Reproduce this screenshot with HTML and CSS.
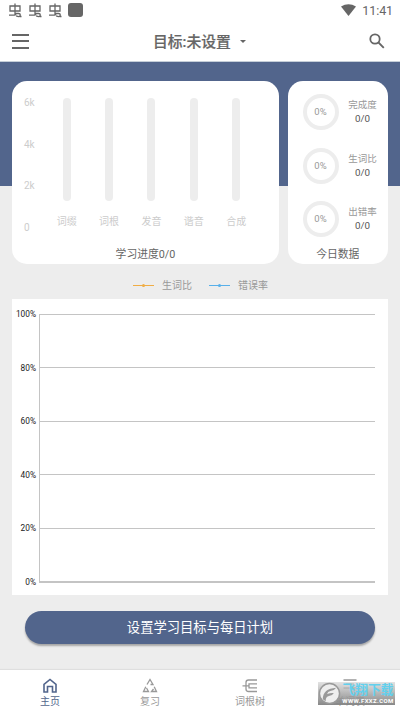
FILE: index.html
```html
<!DOCTYPE html>
<html lang="zh-CN">
<head>
<meta charset="utf-8">
<title>学习进度</title>
<link rel="stylesheet" href="styles.css">
</head>
<body>
<svg width="0" height="0" class="defs"><defs>
<g id="bug"><path d="M2 3h10v5H2zM7 .5v11M1 12.200h5.500Q8 12.200 8 10.500h2.500q1.800 0 1.800 1.500t-2 1.700l-2.200-.9M11.500 13.500h2"/></g>
</defs></svg>
<header class="top">
  <div class="status">
    <svg class="bug" viewBox="0 0 14 15"><use href="#bug"/></svg>
    <svg class="bug" viewBox="0 0 14 15"><use href="#bug"/></svg>
    <svg class="bug" viewBox="0 0 14 15"><use href="#bug"/></svg>
    <span class="square"></span>
    <svg class="wifi" viewBox="0 0 15 12"><path d="M0 2.500Q7.500-2.200 15 2.500L7.500 12z"/></svg>
    <span class="time">11:41</span>
  </div>
  <div class="toolbar">
    <div class="menu"><i></i><i></i><i></i></div>
    <h1>目标:未设置</h1>
    <span class="caret"></span>
    <svg class="search" viewBox="0 0 16 16"><circle cx="6" cy="6" r="4.700"/><path d="M9.500 9.500l5.300 5.300"/></svg>
  </div>
</header>
<main>
  <section class="cards">
    <div class="card progress">
      <div class="plot">
        <div class="scale"><span>6k</span><span>4k</span><span>2k</span><span>0</span></div>
        <div class="col"><i></i><span>词缀</span></div>
        <div class="col"><i></i><span>词根</span></div>
        <div class="col"><i></i><span>发音</span></div>
        <div class="col"><i></i><span>谐音</span></div>
        <div class="col"><i></i><span>合成</span></div>
      </div>
      <div class="caption">学习进度0/0</div>
    </div>
    <div class="card today">
      <div class="stat"><div class="ring">0%</div><div class="info"><span>完成度</span><b>0/0</b></div></div>
      <div class="stat"><div class="ring">0%</div><div class="info"><span>生词比</span><b>0/0</b></div></div>
      <div class="stat"><div class="ring">0%</div><div class="info"><span>出错率</span><b>0/0</b></div></div>
      <div class="caption">今日数据</div>
    </div>
  </section>
  <div class="legend">
    <i class="orange"></i><span>生词比</span><i class="blue"></i><span>错误率</span>
  </div>
  <section class="chart">
    <div class="ticks"><span>100%</span><span>80%</span><span>60%</span><span>40%</span><span>20%</span><span>0%</span></div>
    <div class="grid"><i></i><i></i><i></i><i></i><i></i></div>
  </section>
  <button class="plan">设置学习目标与每日计划</button>
</main>
<nav>
  <a class="active"><svg viewBox="0 0 16 16"><path d="M2 6.300L8 1.500l6 4.800V14h-3.500V8.500h-5V14H2z"/></svg>主页</a>
  <a><svg viewBox="0 0 16 16"><path d="M5 6.500L8 1.500l3 5H8.500M3.800 8.800L1.500 13.500h5L4.500 10M12.200 8.800l2.300 4.700h-5l2-2.500"/></svg>复习</a>
  <a><svg viewBox="0 0 16 16"><path d="M15 2H6.500Q4 2 4 4.500v6.500q0 2.500 2.500 2.500H15M.5 7.800H7M15 5.800H7v4H15"/></svg>词根树</a>
  <a><svg viewBox="0 0 16 16"><path d="M1.500 2h13M4 6h8M1.500 10h13"/></svg>单词表</a>
  <div class="mark">
    <svg viewBox="0 0 24 24"><circle cx="12" cy="12" r="10.500"/><path d="M5 18Q5 7 19 6q-2 3-6 3.500-3 .5-3.500 3 4-1.500 7-1-1.500 3-5 3.200Q8 15 8 20z"/></svg>
    <div class="words"><strong>飞翔下载</strong><small>WWW.FXXZ.COM</small></div>
  </div>
</nav>
</body>
</html>
```

FILE: styles.css
```css
* { box-sizing: border-box; }
body {
  margin: 0;
  width: 400px;
  height: 711px;
  overflow: hidden;
  display: flex;
  flex-direction: column;
  background: #ededed;
  font-family: Roboto, "Noto Sans CJK SC", sans-serif;
  color: #666;
}
.defs { position: absolute; }
svg { fill: none; stroke: currentColor; }
.top { height: 62px; background: #fff; flex: none; border-bottom: 1px solid #c5ced8; }
.status { height: 22px; display: flex; align-items: center; padding: 0 7px 0 8px; }
.bug { width: 14px; height: 15px; margin-right: 6px; margin-top: -1px; stroke-width: 1.300; }
.square { width: 15px; height: 14px; margin-top: -2px; border-radius: 3px; background: #666; }
.wifi { width: 15px; height: 12px; margin-left: auto; margin-top: -2px; fill: #666; stroke: none; }
.time { font-size: 12.500px; line-height: 20px; margin-left: 6px; letter-spacing: -.1px; }
.toolbar { height: 39px; display: flex; align-items: center; padding: 0 15px 0 12px; }
.menu { width: 17px; height: 15px; margin-top: -1px; display: flex; flex-direction: column; justify-content: space-between; }
.menu i { height: 2px; background: #666; }
h1 { margin: 0 0 0 124px; font-size: 14.800px; line-height: 20px; font-weight: 500; white-space: nowrap; -webkit-text-stroke: .2px #666; }
.caret { margin-left: 9px; border: 3.500px solid transparent; border-top-color: #666; border-bottom: 0; }
.search { width: 16px; height: 16px; margin-left: auto; margin-top: -2px; stroke-width: 1.800; }
main { height: 608px; flex: none; padding: 19px 12px 0; background: linear-gradient(#52658c 0 124.500px, #ededed 124.500px); }
.cards { display: flex; justify-content: space-between; height: 183px; }
.card { background: #fff; border-radius: 15px; }
.progress { width: 267px; padding-top: 17px; }
.today { width: 100.500px; padding-top: 13px; }
.plot { display: flex; height: 148px; padding-left: 12px; font-size: 10px; color: #ccc; }
.scale { width: 21.500px; height: 132px; margin-top: -1px; display: flex; flex-direction: column; justify-content: space-between; line-height: 11px; }
.scale span:last-child { margin-bottom: -4px; }
.col { width: 42.400px; display: flex; flex-direction: column; align-items: center; }
.col i { width: 8px; height: 103px; border-radius: 4px; background: #ededed; }
.col span { margin-top: 14px; line-height: 14px; }
.caption { text-align: center; font-size: 10.800px; line-height: 16px; }
.stat { height: 53.700px; display: flex; padding-left: 15px; }
.ring { width: 36px; height: 36px; border: 4px solid #ededed; border-radius: 50%; text-align: center; font-size: 9.500px; line-height: 28px; color: #999; }
.info { width: 38px; margin-left: 5px; padding-top: 4px; display: flex; flex-direction: column; text-align: center; font-size: 9.500px; line-height: 14px; color: #999; }
.info b { font-weight: 400; font-size: 9.800px; color: #555; }
.progress .caption { padding-top: 1px; }
.today .caption { margin-top: -8px; }
.legend { height: 34.500px; padding: 14px 0 0 121px; display: flex; font-size: 10px; line-height: 15px; color: #999; }
.legend span { margin-left: 8px; }
.legend i { position: relative; width: 21px; height: 1px; margin-top: 7px; background: currentColor; }
.legend i::after { content: ""; position: absolute; left: 9px; top: -1px; width: 3px; height: 3px; border-radius: 50%; background: currentColor; }
.legend .orange { color: #f0ad45; }
.legend .blue { color: #58b0ea; margin-left: 17px; }
.chart { height: 296.500px; background: #fff; display: flex; padding-top: 10.500px; }
.ticks { width: 24px; text-align: right; font-size: 8.300px; line-height: 11px; color: #222; height: 278.500px; display: flex; flex-direction: column; justify-content: space-between; }
.grid { width: 336px; height: 269px; margin: 5px 0 0 3px; display: flex; flex-direction: column; border: 1px solid #c4c4c4; border-right: 0; border-bottom-width: 2px; }
.grid i { flex: 1; border-bottom: 1px solid #c4c4c4; }
.grid i:last-child { border: 0; }
.plan { display: block; width: 350px; height: 33px; margin: 16px 0 0 13px; padding: 0; border: 0; border-radius: 17px; background: #52658c; box-shadow: 0 2px 2px rgba(0, 0, 0, .3); color: #fff; font: 13.300px/33px Roboto, "Noto Sans CJK SC", sans-serif; }
nav { position: relative; height: 41px; background: #fff; display: flex; box-shadow: 0 -1px 1px rgba(0, 0, 0, .06); }
nav a { width: 100px; padding-top: 8px; display: flex; flex-direction: column; align-items: center; font-size: 10px; line-height: 16px; color: #999; }
nav a svg { width: 16px; height: 16px; stroke-width: 1.300; }
nav .active { color: #52658c; }
nav .active svg { stroke-width: 1.600; }
.mark { position: absolute; left: 318px; top: 12px; width: 77px; height: 23px; display: flex; background: linear-gradient(rgba(215, 215, 215, .7), rgba(130, 130, 130, .95)); }
.mark svg { width: 23px; height: 23px; stroke: #999; stroke-width: 1.500; }
.mark circle { fill: #eee; }
.mark path { fill: #999; stroke: none; }
.words { width: 54px; text-align: center; white-space: nowrap; }
.words strong { display: block; font-size: 12.800px; line-height: 15px; color: #62d0ed; }
.words small { display: block; color: #fff; font-weight: 700; font-size: 6px; line-height: 7px; letter-spacing: .4px; }
```
